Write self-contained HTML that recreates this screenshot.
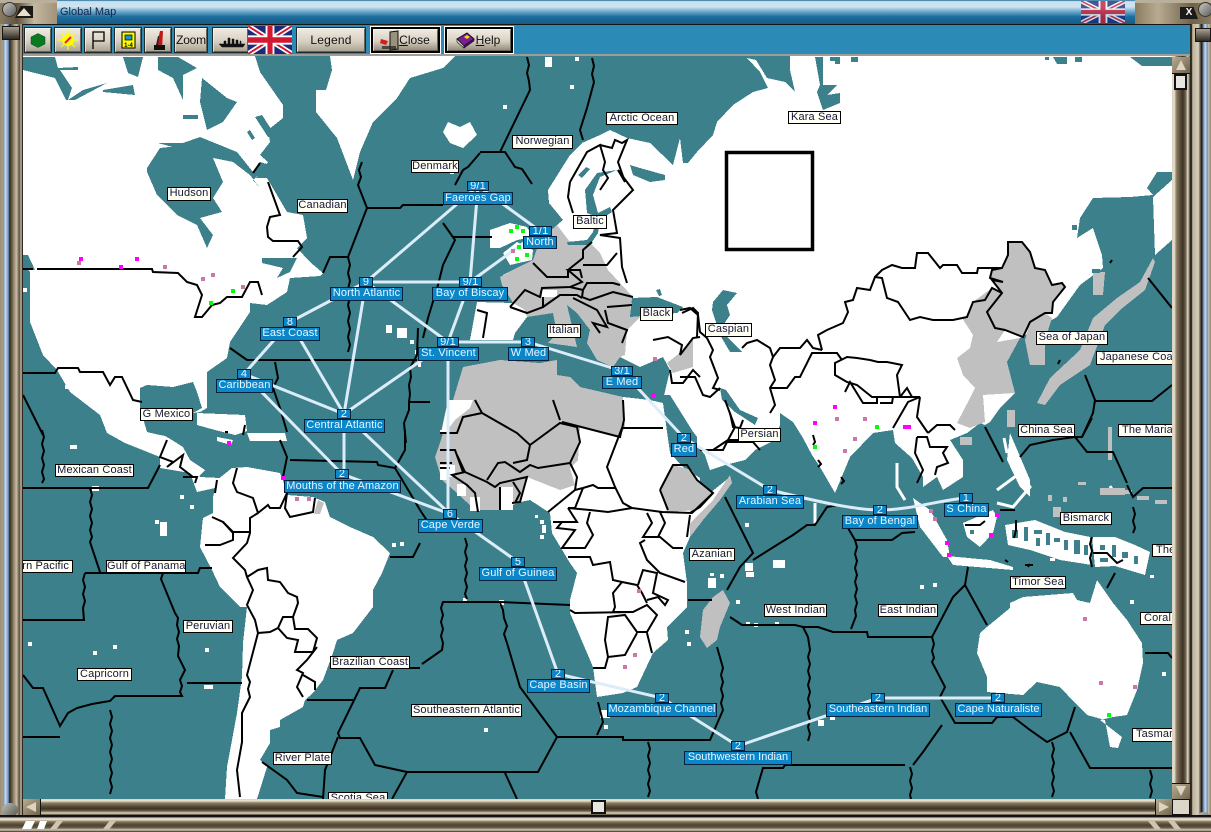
<!DOCTYPE html>
<html><head><meta charset="utf-8"><title>Global Map</title>
<style>
html,body{margin:0;padding:0;background:#3b808b;overflow:hidden}
#page{position:relative;width:1211px;height:832px;overflow:hidden;font-family:"Liberation Sans",sans-serif;background:#6b6150}
.a{position:absolute}
#map{position:absolute;left:0;top:0;width:1211px;height:832px}
#labels{position:absolute;left:0;top:0;width:1211px;height:832px;clip-path:inset(56px 39px 33px 23px)}
#labels div{position:absolute;box-sizing:border-box;border:1px solid #000;font-size:11px;text-align:center;white-space:nowrap;overflow:hidden;letter-spacing:.15px}
#labels .w{background:#fffff4;color:#14143c;line-height:11px}
#labels .b{background:#0a86c9;color:#eaf6ff;line-height:11px;border:1.5px solid #06203c}
#labels .n{background:#0a86c9;color:#eaf6ff;line-height:8px;border:1.5px solid #06203c}
.btn{position:absolute;top:27px;height:26px;box-sizing:border-box;border:1px solid #1b2a2e;background:linear-gradient(#f0ebe2,#d8d0c2 55%,#a89f8e);font-size:12px;color:#111;text-align:center;line-height:24px;box-shadow:inset 1px 1px 0 #fff8,inset -1px -1px 0 #6a6254}
.def{border:2px solid #000;outline:1px solid #fff;background:linear-gradient(#f0ebe2,#d8d0c2 55%,#8f8776)}
.hs{background:linear-gradient(#d8d0bc 0,#e8e2d2 12%,#8a7c62 25%,#5a4e3a 45%,#3c3226 60%,#6a5e48 75%,#e0d8c6 88%,#4a4032 100%)}
.vs{background:linear-gradient(90deg,#d8d0bc 0,#e8e2d2 12%,#8a7c62 25%,#5a4e3a 45%,#3c3226 60%,#6a5e48 75%,#e0d8c6 88%,#4a4032 100%)}
</style></head><body>
<div id="page">
<svg id="map" viewBox="0 0 1211 832" width="1211" height="832">
<defs>
<clipPath id="mc"><rect x="23" y="56" width="1149" height="743"/></clipPath>
<symbol id="uk" viewBox="0 0 60 36" preserveAspectRatio="none">
<rect width="60" height="36" fill="#1c2a78"/>
<path d="M0 0L60 36M60 0L0 36" stroke="#fff" stroke-width="7"/>
<path d="M0 0L60 36M60 0L0 36" stroke="#d01830" stroke-width="2.5"/>
<path d="M30 0V36M0 18H60" stroke="#fff" stroke-width="12"/>
<path d="M30 0V36M0 18H60" stroke="#d01830" stroke-width="7"/>
</symbol>
</defs>
<g clip-path="url(#mc)">
<rect x="23" y="56" width="1149" height="743" fill="#3b808b"/>
<!-- land -->
<g fill="#fff" shape-rendering="crispEdges">
<!-- North America -->
<path d="M23 56L255 56 260 72 283 105 283 118 268 130 270 142 260 155 268 162 256 178 267 178 287 212 303 215 307 238 297 248 310 262 323 273 320 276 290 278 287 292 267 305 250 303 250 312 230 342 227 358 207 372 207 408 200 412 193 413 173 387 147 385 140 388 100 415 70 392 57 370 43 355 30 322 30 272 23 265Z"/>
<path d="M57 370L70 392 100 415 107 433 125 443 160 457 160 468 190 473 197 492 215 488 220 478 200 477 190 460 183 447 172 440 165 436 147 432 140 408 140 388 130 380 100 372Z"/>
<path d="M160 457L190 466 197 478 205 470 190 460 165 445Z"/>
<path d="M197 413L245 415 247 431 235 435 215 430 197 425Z"/>
<path d="M217 437L233 440 231 445 217 441ZM247 433L285 433 287 441 250 441Z"/>
<!-- Greenland -->
<path d="M330 56L332 70 326 90 316 90 316 112 337 138 353 180 360 152 373 122 397 98 410 78 443 68 455 56Z"/>
<!-- South America -->
<path d="M232 468L247 467 280 473 283 480 287 495 313 497 325 502 330 517 350 527 373 537 390 553 382 573 373 590 373 607 353 633 337 640 333 653 323 680 313 693 305 700 303 707 280 720 280 727 270 730 270 743 260 760 267 767 257 799 225 799 227 767 237 713 242 677 243 643 247 607 240 607 220 587 212 570 200 547 202 527 203 518 213 513 213 497 217 480Z"/>
<!-- Iceland -->
<path d="M443 132L448 122 460 127 470 122 477 135 463 148 450 143Z"/>
<!-- UK -->
<path d="M490 230L510 223 527 227 533 237 517 240 500 248 490 248Z"/>
<path d="M503 253L517 242 533 250 532 260 510 265Z"/>
<!-- Eurasia -->
<path d="M470 340L477 302 513 303 502 285 503 275 533 260 540 240 557 225 563 220 549 203 548 190 570 155 582 143 600 135 610 130 627 138 650 143 673 165 680 138 683 163 688 163 697 152 713 135 717 122 733 105 753 92 768 88 760 72 747 58 756 60 767 78 785 82 795 92 790 70 790 56 1172 56 1172 172 1157 172 1147 188 1153 195 1130 197 1093 198 1080 218 1077 238 1093 228 1102 255 1103 268 1080 285 1057 317 1020 338 1007 362 1013 392 1000 408 985 425 980 423 967 433 950 440 963 460 963 477 943 490 937 477 923 487 923 477 912 458 895 443 893 430 873 433 850 457 835 493 820 467 812 455 803 438 793 422 780 413 780 425 775 440 755 450 745 460 725 465 710 470 705 455 697 445 697 437 673 405 663 400 670 370 663 357 640 367 620 357 613 367 597 360 587 343 590 330 577 313 567 305 577 347 548 343 557 333 553 313 527 317 515 333 513 340Z"/>
<path d="M1153 197L1172 180 1172 240 1155 255Z"/>
<!-- Africa -->
<path d="M440 443L447 420 463 367 500 360 540 363 557 360 557 375 570 377 580 387 593 390 623 397 650 400 663 403 670 453 683 467 700 478 700 490 710 493 730 477 713 507 690 537 683 553 687 583 687 607 667 627 668 640 653 653 637 687 623 693 597 697 593 667 570 613 570 600 577 573 570 563 552 533 550 513 530 500 520 502 503 510 475 510 457 493 442 480 435 457Z"/>
<!-- Australia -->
<path d="M987 627L1010 608 1010 603 1023 597 1073 593 1077 600 1090 603 1097 580 1113 603 1127 620 1142 643 1143 663 1137 690 1127 715 1113 717 1100 720 1122 737 1118 748 1110 747 1105 720 1087 715 1075 703 1060 687 1037 682 1023 695 987 692 987 677 977 653 980 633Z"/>
<!-- SE Asia -->
<path d="M963 523L993 510 997 517 993 533 980 547 967 537Z"/>
<path d="M913 498L930 510 947 540 950 557 943 557 920 527Z"/>
<path d="M947 556L990 560 1013 567 1013 570 953 565Z"/>
<path d="M1010 433L1030 480 1030 497 1020 487 1007 460Z"/>
<path d="M1005 525L1035 520 1065 532 1090 537 1092 565 1060 560 1030 550 1008 545Z"/>
<path d="M1092 537L1115 537 1135 545 1150 552 1145 575 1115 566 1095 567Z"/>
<!-- small islands -->
<path d="M23 288h4v4h-4zM70 445h7v4h-7zM92 486h7v5h-7zM180 495h4v4h-4zM155 520h4v4h-4zM160 522h7v14h-7zM190 505h4v4h-4zM206 534h4v3h-4zM28 642h4v4h-4zM93 651h4v4h-4zM113 645h4v4h-4zM205 648h4v4h-4zM204 685h9v4h-9zM392 543h4v4h-4zM400 542h4v4h-4zM54 360h4v4h-4zM100 390h4v4h-4zM65 385h4v4h-4zM386 325h6v8h-6zM397 328h10v10h-10zM410 340h4v4h-4zM415 350h4v4h-4zM418 362h3v5h-3zM440 430h5v4h-5zM508 225h6v6h-6zM528 140h4v4h-4zM570 85h4v4h-4zM503 105h4v4h-4zM450 170h4v4h-4zM545 57h7v10h-7zM575 57h4v4h-4zM535 515h3v3h-3z"/>
<path d="M463 598h4v5h-4zM499 600h5v5h-5zM540 520h4v4h-4zM542 525h4v8h-4zM540 535h4v4h-4zM708 578h8v10h-8zM710 573h4v3h-4zM745 523h4v4h-4zM720 574h4v4h-4zM736 600h4v4h-4zM746 572h8v5h-8zM745 563h8v8h-8zM746 622h4v4h-4zM754 623h4v4h-4zM775 622h4v4h-4zM773 560h12v8h-12zM685 630h4v4h-4zM687 642h4v4h-4zM483 710h4v4h-4zM484 728h4v4h-4zM600 710h10v8h-10zM604 725h4v4h-4zM1050 558h5v3h-5zM1060 600h4v4h-4zM1130 600h4v4h-4zM818 720h6v6h-6zM933 583h4v4h-4zM920 585h4v4h-4zM1162 672h4v4h-4zM830 715h5v5h-5zM1150 575h4v3h-4z"/>
</g>
<path d="M815 503v20M897 463v24l8 13M1110 486l5 8M1004 438l3 15" stroke="#fff" stroke-width="3" fill="none"/>
<path d="M997 490L1020 473 1030 487 1013 507 997 503" stroke="#fff" stroke-width="3" fill="none"/>
<!-- gray -->
<g fill="#c0c0c0" shape-rendering="crispEdges">
<path d="M463 367L500 360 540 363 557 360 557 375 570 377 580 387 593 390 623 397 625 427 620 437 580 427 578 460 570 468 575 485 560 490 527 477 520 502 503 510 475 510 457 493 442 480 435 457 440 443 447 420Z"/>
<path d="M660 490L673 465 692 470 700 483 713 493 697 510 667 512Z"/>
<path d="M690 523L700 513 713 500 730 475 732 483 720 500 703 520 690 537Z"/>
<path d="M700 637L703 610 713 597 723 590 730 603 720 627 717 640 707 648Z"/>
<path d="M500 277L533 260 540 240 557 225 570 242 587 240 600 253 608 270 620 283 633 297 630 307 640 317 627 330 625 355 620 357 613 367 597 360 587 343 590 330 577 313 567 305 577 347 548 343 557 333 553 313 527 317 525 310 513 303 502 285Z"/>
<path d="M667 363L687 347 693 337 693 367 673 373Z"/>
<path d="M962 318L973 335 970 348 957 358 963 375 975 388 970 398 957 423 970 428 985 422 983 395 1015 393 1007 362 1020 338 997 342 1005 330 987 312 1002 293 992 288 973 302 967 317Z"/>
<path d="M1008 242L1022 242 1030 252 1035 268 1045 270 1052 285 1062 283 1065 287 1053 302 1052 313 1045 313 1030 322 1023 337 1005 330 995 328 987 312 1002 293 992 280 1003 282 990 278 992 270 1002 268 1008 255Z"/>
<path d="M1025 340L1030 322 1045 313 1052 318 1045 340 1045 365 1030 365Z"/>
<path d="M1037 403L1050 378 1080 350 1093 318 1117 298 1140 282 1153 258 1155 262 1145 290 1120 310 1105 325 1090 365 1060 385 1045 405Z"/>
<path d="M1093 272h12l-2 23h-10zM1100 488h25v7h-25zM1078 482h8v3h-8zM1053 507h8v10h-8zM1108 427h4v33h-4zM1007 410h8v17h-8zM960 437h12v8h-12zM1124 490h8v4h-8zM1137 496h12v4h-12zM1155 500h12v4h-12zM1063 497h4v5h-4zM1048 495h4v6h-4z"/>
</g>
<path d="M542 290h15v7h-15zM985 395L1015 393 1000 408 990 422 985 425Z" fill="#fff"/>
<path d="M448 400H473L470 408 455 420 446 432 441 433Z" fill="#fff"/>
<path d="M457 484h9v12h-9zM470 497h10v14h-10zM500 487h13v23h-13zM440 465h15v12h-15zM440 475h8v5h-8z" fill="#fff"/>
<path d="M318 500l6 3-4 11h-6z" fill="#c0c0c0"/>
<!-- teal patches -->
<g fill="#3b808b" shape-rendering="crispEdges">
<path d="M23 70L23 57 55 57 58 68 78 67 78 70 60 70 72 88 68 100 83 90 107 83 90 92 75 100 66 100 55 78Z"/>
<path d="M103 90L133 85 135 95 103 92Z"/>
<path d="M123 57L143 57 138 77 128 73Z"/>
<path d="M158 57L178 57 197 68 183 75 183 100 173 78 158 70Z"/>
<path d="M202 78L227 98 237 102 223 122 207 130 200 102Z"/>
<path d="M183 115h15v4h-15zM205 115l10 0 0 3-10 0z"/>
<path d="M255 117L262 115 275 135 268 137ZM250 130l5 8-3 2-5-8z"/>
<path d="M158 143L183 143 200 137 237 152 253 172 260 162 270 165 253 180 260 188 250 175 233 162 213 158 Z"/>
<path d="M147 168L160 148 187 145 213 158 223 182 213 198 222 212 200 218 213 235 207 248 197 225 177 215 157 195 147 172Z"/>
<path d="M262 258L297 258 290 272 277 278 283 268 262 263Z"/>
<path d="M140 388L147 385 173 387 193 382 197 392 202 408 193 413 190 422 160 435 147 432 140 408Z"/>
<path d="M23 255h5l7 15h-12z"/>
<!-- Baltic -->
<path d="M567 242L587 240 593 232 597 217 587 213 585 190 597 173 617 170 600 177 593 195 598 213 610 207 612 212 600 220 598 233 590 245 568 245Z"/>
<path d="M630 165L640 168 665 175 665 180 650 182 633 175Z"/>
<path d="M500 120h6v10h-6zM578 175l8-8 4 2-8 9z"/>
<!-- Black / Caspian -->
<path d="M632 298L657 297 683 307 677 313 630 317ZM656 290l3 6 3-1-2-6z"/>
<path d="M713 302L723 290 737 293 727 305 730 315 720 330 735 345 742 352 730 352 720 335 712 310Z"/>
<!-- Red Sea and gulf -->
<path d="M660 395L670 395 695 435 697 455 703 470 695 470 685 445Z"/>
<path d="M720 388L726 390 740 410 758 418 755 425 735 412 722 400Z"/>
<!-- Arctic Russia -->
<path d="M815 57L823 57 823 85 837 85 827 95 840 93 840 103 823 110 817 92 820 85ZM830 57h10v7h-5v-3h-5zM851 57h7v5h-7zM1053 57h14v7h-10zM1075 57h7v5h-7zM1130 57h42v9h-30zM1045 57h4v3h-4zM1072 225h5v5h-5z"/>
<path d="M1092 269h8v4h-8z"/>
<!-- Indonesia speckle -->
<path d="M1012 530h6v8h-6zM1024 527h4v14h-4zM1034 530h8v4h-8zM1036 538h4v8h-4zM1046 533h4v12h-4zM1054 538h6v4h-6zM1064 540h4v10h-4zM1074 540h6v14h-6zM1084 545h4v10h-4zM1100 545h5v5h-5zM1112 545h4v12h-4zM1122 552h6v6h-6zM1134 556h4v8h-4zM1100 558h8v4h-8zM970 530h4v4h-4zM960 548h8v3h-8z"/>
</g>
<!-- borders -->
<g fill="none" stroke="#000" stroke-width="2" stroke-linejoin="miter">
<path d="M527 57l2 8-2 8 2 8 1 9-30 62h-20l25 0 10 15 7 2 10 15"/>
<path d="M480 153l-12 14-5 3-8 15"/>
<path d="M592 58l2 8-2 8 2 8-7 26-7 22 3 10"/>
<path d="M362 162l-3 8 2 7-3 8 9 23h33l3-3h40"/>
<path d="M443 223l12 17-12 25-5 20-10 33-5 20"/>
<path d="M453 237h39"/>
<path d="M367 208L348 257H330L323 273"/>
<path d="M348 257l2 8-2 8 2 8-2 8 2 8-2 8 2 8-2 8 2 8-2 8 2 8-2 7"/>
<path d="M230 348L247 360H417"/>
<path d="M275 362l3 16-5 10 7 20 7 24"/>
<path d="M418 328l-1 27-7 13 1 9-2 8 1 9-1 8 0 8-5 13 2 20"/>
<path d="M410 402h20"/>
<path d="M23 373H55l3-5H78l2 4H103l7 13 5-8H122l11 23 9 2"/>
<path d="M23 269H33M37 269H152l1 3 25 1 9 9 10 3 5 10-7 22h7l10-12 8-2 7-6h15l8-15h8l4 13"/>
<path d="M268 182L280 215 270 217 267 227 268 237 273 241H298L302 247 293 257"/>
<path d="M260 163L253 173"/>
<path d="M23 395L43 435"/>
<path d="M42 430l2 7-2 7 2 7-2 7 2 7-2 7 2 7-2 4"/>
<path d="M23 488H148L160 465"/>
<path d="M90 488l2 7-2 7 2 7-2 7 2 7-2 7 2 7-2 5 10 30"/>
<path d="M85 573H198L200 568H212"/>
<path d="M85 573l-2 7 2 7-2 7 2 7-2 7 1 12H23"/>
<path d="M163 573l-2 6 14 34 3 5-1 7 2 7-2 7 2 7-1 10 7 14-5 10 2 6-2 6 2 4H115l-5 5-18 3-15 4-9 5-8 13-17-38H33L23 675"/>
<path d="M23 737H60"/>
<path d="M110 710l2 7-2 7 2 7-2 7 2 7-2 7 2 7-2 7 2 7-2 7 2 7-2 7"/>
<path d="M187 683H242"/>
<path d="M353 700H307"/>
<path d="M393 670L385 688H360L338 733 340 738H360L375 765 407 772 392 799"/>
<path d="M338 737L325 770 323 799"/>
<path d="M407 772H430M408 668H420M390 557H413L420 543"/>
<path d="M290 460L377 462 378 465 395 468 410 493 420 510 430 525"/>
<path d="M405 430v20l-10 18"/>
<!-- S America -->
<path d="M237 468L233 483 237 492 253 498 258 513 268 505 270 508H280L287 493 285 508 290 517 313 512 315 498"/>
<path d="M258 513L250 518V533L247 543 233 558 245 570 247 577 253 590 247 605 255 620 258 633 247 675l3 7-2 7 2 8-8 16v29l-5 28 3 27"/>
<path d="M212 517L223 522 233 533V540L220 545H205"/>
<path d="M223 522L233 532H250"/>
<path d="M247 577L258 570 267 568 268 580 280 582 288 593 297 597 298 603 293 617H283L278 628 270 632 258 633"/>
<path d="M278 628L287 638 298 640 295 652H313L317 638 308 629H295L293 617"/>
<path d="M317 647L307 660 297 670 303 673 297 687 303 697"/>
<path d="M303 675L315 682V690"/>
<path d="M262 762L287 780 297 793 323 797"/>
<!-- C America -->
<path d="M167 440L160 457 173 462 167 467 183 455 180 467 193 477M183 477H197L195 483M217 480L215 493M280 440L287 457 283 477M225 432h3M245 425l-2 10"/>
<!-- Oceans S -->
<path d="M465 538l2 7-2 7 2 7-2 7 2 7-2 7 2 7-2 7 2 5"/>
<path d="M467 602H443l-2 6 2 7-2 7 2 7-2 7 2 7-1 7-20 14"/>
<path d="M443 602H500L570 605"/>
<path d="M500 603l3 7 1 8 3 8-3 8 3 9 13 44 37 50-19 35H420"/>
<path d="M557 737H623V740H710L723 710l-2-7 2-7-2-7 2-7-2-7 2-7-2-7-4-14"/>
<path d="M598 702l2 8 3 12-6 13"/>
<path d="M648 742l2 7-2 7 2 7-2 7 2 7-2 7 2 7-2 6"/>
<path d="M505 773L517 799"/>
<path d="M758 799l-2-7 2-7 2-7 3-10h20l2-3h120"/>
<path d="M688 600H712"/>
<path d="M730 617L742 625H795L803 627H818L833 632H867L868 637H932L953 597 965 585 968 567"/>
<path d="M803 627l5 10 2 13-2 7 2 7-2 7 2 7-2 7 2 7-2 7 2 7-2 7 2 7-2 7 2 7-2 7"/>
<path d="M725 497L753 553 740 567 727 590"/>
<path d="M753 560L780 543 793 535 807 525H815L827 507 838 505"/>
<path d="M848 528L855 540H892L902 533 915 532"/>
<path d="M855 540l2 7-2 7 2 7-2 7 2 7-2 7 2 7-2 7 2 7-2 7 1 6-5 13"/>
<path d="M965 585L987 625"/>
<path d="M932 637l2 7-2 7 2 7-2 4 13 25-5 10 15 26H992L997 717H1013L1030 730 1047 742 1067 732 1075 707"/>
<path d="M942 725L923 752 913 765"/>
<path d="M910 767l2 7-2 7 2 7-2 7 1 4"/>
<path d="M1052 742l2 7-2 7 2 7-2 7 2 7-2 7 2 7-2 6"/>
<path d="M1070 732L1090 768H1172"/>
<path d="M1150 770l2 7-2 7 2 7-2 7"/>
<path d="M1145 653H1168L1172 658"/>
<path d="M1092 537l-2 7 2 7-2 7 2 9M1093 553H1107L1117 563 1123 560M1107 588L1115 573"/>
<path d="M1133 507l2 7-2 7 2 7-2 5"/>
<path d="M1127 485L1133 497 1143 488H1172"/>
<path d="M1020 457L1030 445 1053 440 1075 437 1082 437 1092 418"/>
<path d="M1075 437L1087 452H1113L1127 483"/>
<path d="M985 427L1003 462"/>
<path d="M1016 520v10l-2 8M1000 510l15 0M1025 565h8M1005 560l3 2M1030 564l-2 3M965 525h15l5-4M1008 510h4"/>
<!-- Japan pacific -->
<path d="M1085 375L1095 400 1093 413 1082 437M1095 401H1152L1172 385"/>
<path d="M1148 278L1172 308"/>
<path d="M1112 260l-2 3M1060 360l-2 4"/>
<!-- Asia -->
<path d="M822 350L818 335 827 330 843 323 848 312 845 302 853 300 857 288 870 290 875 277 882 278 887 298 898 302 910 320 920 317 933 320H953L967 317 973 302 985 300 992 288 1002 293"/>
<path d="M875 277L882 270 892 265 902 268H915L917 253H928L940 268 943 265H957L962 273H977L978 268H1002"/>
<path d="M1008 242H1022L1030 252 1035 268 1045 270 1052 285 1062 283 1065 287 1053 302 1052 313H1045L1030 322 1023 337 1005 330 995 328 987 312 1002 293 992 280 1003 282 990 278 992 270 1002 268 1008 255Z"/>
<path d="M680 310L690 308 698 315 700 332 707 338 713 350 710 357 718 378 713 388 720 390"/>
<path d="M742 348L747 343 757 340 770 348 773 357 780 348H800L807 340 813 348 822 350"/>
<path d="M773 357L770 365 775 380 770 388 775 405 770 413"/>
<path d="M770 388H787L795 377H800L812 353H837L842 360"/>
<path d="M835 363V375L847 382 857 385 872 397H900L897 375 902 365 887 362H878L870 360 857 358 847 357Z"/>
<path d="M845 392L850 382 863 403H877V397M880 403H892L893 397"/>
<path d="M893 428L908 402 920 397H900L907 388 912 397M920 397L917 417 928 433"/>
<path d="M917 437L915 453 923 470 917 483"/>
<path d="M917 437H927L930 447H947L943 453 948 463 937 467 935 475"/>
<path d="M928 433L937 425H950L955 430"/>
<path d="M813 435l2 7-2 3M818 460l3 4-3 3M841 477l3 4-3 3"/>
<path d="M680 355L693 338 700 337"/>
<path d="M680 377H695L703 395 710 397 720 388"/>
<path d="M730 413L733 427 740 428 743 420M728 440H738"/>
<path d="M725 400L735 427 728 440 713 450M700 450H723L727 442H753L760 450"/>
<!-- Africa borders -->
<path d="M475 400L482 413 463 417 457 433H440"/>
<path d="M482 413L517 433 530 445 560 423 577 427 580 442 570 463 577 477 575 490"/>
<path d="M553 400L560 420M562 422L620 437 624 420 623 400"/>
<path d="M622 428H663M622 428L607 467 615 487 623 503 632 508 662 512 692 513 713 493"/>
<path d="M570 463L538 468 530 465 520 472 505 462 498 463 487 480"/>
<path d="M530 445L527 460 513 463"/>
<path d="M457 455L465 472 487 482 495 487 500 483 527 477 520 502 512 503"/>
<path d="M465 472L452 475 467 485 475 493 478 512"/>
<path d="M500 487V510M513 482L520 493 515 503"/>
<path d="M440 450H455L463 472M440 463H452M440 468H450"/>
<path d="M575 490L583 488 593 485 598 488H615"/>
<path d="M583 488L575 508H568L590 510 608 512 632 508"/>
<path d="M575 490L548 512"/>
<path d="M568 508L577 522H553M577 522H562L557 528 575 530 562 548H585L593 535 587 523 590 512"/>
<path d="M647 513L652 523 643 537H660L673 548H683"/>
<path d="M660 512L665 523 658 537M690 515L687 537"/>
<path d="M568 557H590L593 565 610 562 613 580 622 582 613 593 615 607 613 612H633L647 605 657 615 647 632H637L625 615 608 617 605 640 608 657 605 668H593"/>
<path d="M570 610L575 613 633 612"/>
<path d="M622 582L637 585 642 593 647 603"/>
<path d="M638 585L643 570 657 573 653 593 668 600 665 605 658 597 647 600"/>
<path d="M645 540L640 543 647 560 660 573 685 582"/>
<path d="M637 633L625 655 608 657M647 633L652 653"/>
<path d="M660 490L673 465H687L697 480 713 493 700 507 690 513M660 490L668 510"/>
<!-- Europe borders -->
<path d="M510 307L525 290 540 297 542 288 570 287 582 282 568 270H580L582 278"/>
<path d="M510 307L527 313 543 307V297"/>
<path d="M533 263L547 277H568V270M568 270L583 258V250L592 242"/>
<path d="M583 265H607L617 253"/>
<path d="M570 287L583 290 587 283H613L620 285"/>
<path d="M583 290L582 297 590 300 613 292 633 297"/>
<path d="M543 307L560 295H577L582 298"/>
<path d="M573 298L597 310 607 327 593 323 600 333"/>
<path d="M607 307L632 305M605 310L608 323 627 330 622 343"/>
<path d="M477 310L487 313 483 338"/>
<path d="M570 182L568 197 573 213"/>
<path d="M618 170L633 190 613 210 617 233 600 235 620 238 622 267 627 283"/>
<path d="M570 182L587 152 600 145 605 162 603 170 608 178 600 190"/>
<path d="M600 145L612 148 615 140 622 143 627 140 618 162 625 182 618 170"/>
<path d="M670 370L672 383H683L693 370 700 377"/>
<path d="M682 313L693 308 698 313 697 337"/>
<path d="M653 340L668 337 682 345 680 355"/>
</g>
<!-- network lines -->
<g stroke="#dcedf9" stroke-width="3" fill="none">
<path d="M478 186L366 282M478 186L470 282M478 186L540 231M540 231L470 282M366 282H470M470 282L448 342M366 282L448 342M366 282L344 414M366 282L290 322M290 322L244 374M290 322L344 414M244 374L344 414M244 374L342 474M448 342L344 414M448 342H528M528 342L622 371M448 342V514M344 414V474M344 414L450 514M342 474L450 514M450 514L518 562M518 562L558 674M558 674L662 698M662 698L738 746M738 746L878 698M878 698H998M622 371L684 438M684 438L770 490M770 490C800 497 850 510 880 510C910 510 940 500 966 498"/>
</g>
<!-- viewport rect -->
<rect x="726.5" y="152.5" width="86" height="97" fill="none" stroke="#000" stroke-width="3.5"/>
<!-- dots -->
<g fill="#ff00ff" shape-rendering="crispEdges">
<rect x="79" y="257" width="4" height="4"/><rect x="119" y="265" width="4" height="4"/><rect x="135" y="257" width="4" height="4"/><rect x="651" y="393" width="4" height="4"/><rect x="227" y="441" width="4" height="4"/><rect x="281" y="476" width="4" height="4"/><rect x="833" y="405" width="4" height="4"/><rect x="813" y="421" width="4" height="4"/><rect x="903" y="425" width="8" height="4"/><rect x="995" y="513" width="4" height="4"/><rect x="989" y="533" width="4" height="4"/><rect x="945" y="541" width="4" height="4"/><rect x="947" y="553" width="4" height="4"/>
</g>
<g fill="#cc77aa" shape-rendering="crispEdges">
<rect x="77" y="261" width="4" height="4"/><rect x="163" y="265" width="4" height="4"/><rect x="201" y="277" width="4" height="4"/><rect x="211" y="273" width="4" height="4"/><rect x="241" y="285" width="4" height="4"/><rect x="511" y="249" width="4" height="4"/><rect x="653" y="357" width="4" height="4"/><rect x="295" y="497" width="4" height="4"/><rect x="307" y="497" width="4" height="4"/><rect x="835" y="417" width="4" height="4"/><rect x="863" y="417" width="4" height="4"/><rect x="853" y="437" width="4" height="4"/><rect x="843" y="449" width="4" height="4"/><rect x="929" y="509" width="4" height="4"/><rect x="933" y="517" width="4" height="4"/><rect x="1083" y="617" width="4" height="4"/><rect x="1099" y="681" width="4" height="4"/><rect x="1133" y="685" width="4" height="4"/><rect x="637" y="589" width="4" height="4"/><rect x="633" y="653" width="4" height="4"/><rect x="623" y="665" width="4" height="4"/>
</g>
<g fill="#00ff00" shape-rendering="crispEdges">
<rect x="231" y="289" width="4" height="4"/><rect x="209" y="301" width="4" height="4"/><rect x="509" y="229" width="4" height="4"/><rect x="515" y="225" width="4" height="4"/><rect x="521" y="229" width="4" height="4"/><rect x="517" y="245" width="4" height="4"/><rect x="515" y="257" width="4" height="4"/><rect x="525" y="253" width="4" height="4"/><rect x="813" y="445" width="4" height="4"/><rect x="875" y="425" width="4" height="4"/><rect x="1107" y="713" width="4" height="4"/>
</g>
</g>
</svg>

<div id="labels">
<div class="w" style="left:606px;top:112px;width:72px;height:13px">Arctic Ocean</div>
<div class="w" style="left:788px;top:111px;width:53px;height:13px">Kara Sea</div>
<div class="w" style="left:512px;top:135px;width:61px;height:14px">Norwegian</div>
<div class="w" style="left:411px;top:160px;width:48px;height:13px">Denmark</div>
<div class="w" style="left:167px;top:187px;width:44px;height:14px">Hudson</div>
<div class="w" style="left:297px;top:199px;width:51px;height:14px">Canadian</div>
<div class="w" style="left:573px;top:215px;width:34px;height:14px">Baltic</div>
<div class="w" style="left:547px;top:324px;width:34px;height:14px">Italian</div>
<div class="w" style="left:640px;top:307px;width:33px;height:14px">Black</div>
<div class="w" style="left:705px;top:323px;width:47px;height:14px">Caspian</div>
<div class="w" style="left:140px;top:408px;width:53px;height:13px">G Mexico</div>
<div class="w" style="left:738px;top:428px;width:43px;height:14px">Persian</div>
<div class="w" style="left:55px;top:464px;width:79px;height:13px">Mexican Coast</div>
<div class="w" style="left:-20px;top:560px;width:93px;height:13px;text-align:right;padding-right:3px">ern Pacific</div>
<div class="w" style="left:106px;top:560px;width:80px;height:13px">Gulf of Panama</div>
<div class="w" style="left:183px;top:620px;width:50px;height:13px">Peruvian</div>
<div class="w" style="left:77px;top:668px;width:55px;height:13px">Capricorn</div>
<div class="w" style="left:330px;top:656px;width:80px;height:13px">Brazilian Coast</div>
<div class="w" style="left:273px;top:752px;width:59px;height:13px">River Plate</div>
<div class="w" style="left:328px;top:792px;width:60px;height:14px">Scotia Sea</div>
<div class="w" style="left:411px;top:704px;width:111px;height:13px">Southeastern Atlantic</div>
<div class="w" style="left:689px;top:548px;width:46px;height:13px">Azanian</div>
<div class="w" style="left:764px;top:604px;width:63px;height:13px">West Indian</div>
<div class="w" style="left:878px;top:604px;width:60px;height:13px">East Indian</div>
<div class="w" style="left:1018px;top:424px;width:57px;height:13px">China Sea</div>
<div class="w" style="left:1036px;top:331px;width:72px;height:14px">Sea of Japan</div>
<div class="w" style="left:1096px;top:351px;width:82px;height:14px;text-align:left;padding-left:3px">Japanese Coast</div>
<div class="w" style="left:1118px;top:424px;width:80px;height:13px;text-align:left;padding-left:3px">The Marianas</div>
<div class="w" style="left:1060px;top:512px;width:52px;height:13px">Bismarck</div>
<div class="w" style="left:1152px;top:544px;width:60px;height:13px;text-align:left;padding-left:3px">The</div>
<div class="w" style="left:1010px;top:576px;width:56px;height:13px">Timor Sea</div>
<div class="w" style="left:1140px;top:612px;width:60px;height:13px;text-align:left;padding-left:3px">Coral Sea</div>
<div class="w" style="left:1132px;top:728px;width:70px;height:14px;text-align:left;padding-left:3px">Tasman Sea</div>

<div class="b" style="left:443px;top:192px;width:70px;height:13px">Faeroes Gap</div><div class="n" style="left:467px;top:181px;width:22px;height:10px">9/1</div>
<div class="b" style="left:523px;top:236px;width:34px;height:13px">North</div><div class="n" style="left:529px;top:226px;width:23px;height:10px">1/1</div>
<div class="b" style="left:432px;top:287px;width:76px;height:14px">Bay of Biscay</div><div class="n" style="left:459px;top:277px;width:23px;height:10px">9/1</div>
<div class="b" style="left:418px;top:347px;width:61px;height:14px">St. Vincent</div><div class="n" style="left:437px;top:337px;width:22px;height:10px">9/1</div>
<div class="b" style="left:508px;top:347px;width:41px;height:14px">W Med</div><div class="n" style="left:521px;top:337px;width:14px;height:10px">3</div>
<div class="b" style="left:602px;top:376px;width:40px;height:13px">E Med</div><div class="n" style="left:611px;top:366px;width:22px;height:10px">3/1</div>
<div class="b" style="left:330px;top:287px;width:73px;height:14px">North Atlantic</div><div class="n" style="left:359px;top:277px;width:14px;height:10px">9</div>
<div class="b" style="left:260px;top:327px;width:60px;height:14px">East Coast</div><div class="n" style="left:283px;top:317px;width:14px;height:10px">8</div>
<div class="b" style="left:216px;top:379px;width:57px;height:14px">Caribbean</div><div class="n" style="left:237px;top:369px;width:14px;height:10px">4</div>
<div class="b" style="left:304px;top:419px;width:81px;height:14px">Central Atlantic</div><div class="n" style="left:337px;top:409px;width:14px;height:10px">2</div>
<div class="b" style="left:284px;top:480px;width:117px;height:13px">Mouths of the Amazon</div><div class="n" style="left:335px;top:469px;width:14px;height:10px">2</div>
<div class="b" style="left:418px;top:519px;width:65px;height:14px">Cape Verde</div><div class="n" style="left:443px;top:509px;width:14px;height:10px">6</div>
<div class="b" style="left:479px;top:567px;width:78px;height:14px">Gulf of Guinea</div><div class="n" style="left:511px;top:557px;width:14px;height:10px">5</div>
<div class="b" style="left:527px;top:679px;width:63px;height:14px">Cape Basin</div><div class="n" style="left:551px;top:669px;width:14px;height:10px">2</div>
<div class="b" style="left:607px;top:703px;width:110px;height:14px;letter-spacing:0">Mozambique Channel</div><div class="n" style="left:655px;top:693px;width:14px;height:10px">2</div>
<div class="b" style="left:684px;top:751px;width:108px;height:14px;letter-spacing:0">Southwestern Indian</div><div class="n" style="left:731px;top:741px;width:14px;height:10px">2</div>
<div class="b" style="left:671px;top:443px;width:26px;height:14px">Red</div><div class="n" style="left:677px;top:433px;width:14px;height:10px">2</div>
<div class="b" style="left:736px;top:495px;width:68px;height:14px">Arabian Sea</div><div class="n" style="left:763px;top:485px;width:14px;height:10px">2</div>
<div class="b" style="left:842px;top:515px;width:76px;height:14px">Bay of Bengal</div><div class="n" style="left:873px;top:505px;width:14px;height:10px">2</div>
<div class="b" style="left:944px;top:503px;width:45px;height:14px">S China</div><div class="n" style="left:959px;top:493px;width:14px;height:10px">1</div>
<div class="b" style="left:826px;top:703px;width:104px;height:14px;letter-spacing:0">Southeastern Indian</div><div class="n" style="left:871px;top:693px;width:14px;height:10px">2</div>
<div class="b" style="left:955px;top:703px;width:87px;height:14px;letter-spacing:0">Cape Naturaliste</div><div class="n" style="left:991px;top:693px;width:14px;height:10px">2</div>
</div>

<!-- title bar -->
<div class="a" style="left:0;top:0;width:1211px;height:3px;background:#b9b09c"></div>
<div class="a" style="left:57px;top:0;width:1078px;height:24px;background:linear-gradient(#0f5f8f 0,#c9e0ee 6%,#cfe3ef 28%,#6fa9cc 48%,#1c6d9e 70%,#175b85 100%)"></div>
<div class="a" style="left:60px;top:5px;font-size:11px;color:#12264a;line-height:14px">Global Map</div>
<svg class="a" style="left:1081px;top:1px;width:44px;height:22px;opacity:.75"><use href="#uk" width="44" height="22"/></svg>
<div class="a" style="left:0;top:3px;width:57px;height:21px;background:linear-gradient(90deg,#8a7c62,#5e5340 30%,#c4b89e 60%,#a0937a);border-bottom:1px solid #1a1510"></div>
<div class="a" style="left:2px;top:2px;width:13px;height:13px;border-radius:50%;background:linear-gradient(135deg,#c8c8c4,#5c5c5c);border:1px solid #3a3428"></div>
<div class="a" style="left:15px;top:6px;width:18px;height:12px;background:#1c1a16;clip-path:polygon(30% 0,100% 0,100% 100%,0 100%)"></div>
<div class="a" style="left:17px;top:8px;width:14px;height:8px;background:#e8e0cc;clip-path:polygon(50% 0,100% 100%,0 100%)"></div>
<div class="a" style="left:1135px;top:3px;width:76px;height:21px;background:linear-gradient(90deg,#8a7c62,#b8ab90 30%,#6e624c 75%,#8a7c62);border-bottom:1px solid #1a1510"></div>
<div class="a" style="left:1180px;top:7px;width:18px;height:12px;background:#1c1a16;clip-path:polygon(0 0,75% 0,100% 100%,0 100%);color:#fff;font:bold 10px/12px 'Liberation Sans',sans-serif;text-align:center">X</div>
<div class="a" style="left:1198px;top:2px;width:13px;height:13px;border-radius:50%;background:linear-gradient(135deg,#c8c8c4,#5c5c5c);border:1px solid #3a3428"></div>

<!-- left frame -->
<div class="a" style="left:0;top:24px;width:23px;height:794px;background:linear-gradient(90deg,#9a8e76 0,#a89c84 12%,#6f93be 14%,#c8dcf0 24%,#6f93be 36%,#2c2820 42%,#5e5240 50%,#8c7e64 58%,#c8bea8 72%,#5a4e3c 84%,#c8bea8 92%,#1c1812 98%)"></div>
<div class="a" style="left:2px;top:26px;width:16px;height:12px;background:linear-gradient(#a8a090,#2e2a24);border:1px solid #1a1510"></div>
<div class="a" style="left:2px;top:803px;width:16px;height:14px;background:linear-gradient(135deg,#c0c0bc,#55554e);border-radius:50%"></div>

<!-- right frame -->
<div class="a" style="left:1190px;top:24px;width:21px;height:794px;background:linear-gradient(90deg,#2c2820 0,#2c2820 8%,#bcb19a 12%,#d8d0bc 40%,#6e624c 48%,#1c1812 56%,#6f93be 64%,#c8dcf0 74%,#6f93be 82%,#c6bca6 88%,#8e826a 100%)"></div>
<div class="a" style="left:1195px;top:28px;width:14px;height:12px;background:linear-gradient(#a8a090,#2e2a24);border:1px solid #1a1510"></div>
<div class="a" style="left:1196px;top:812px;width:15px;height:15px;background:linear-gradient(135deg,#c0c0bc,#55554e);border-radius:50%"></div>

<!-- toolbar -->
<div class="a" style="left:23px;top:24px;width:1167px;height:30px;background:#2c8ab6"></div>
<div class="a" style="left:23px;top:24px;width:1167px;height:1px;background:#1a1510"></div>
<div class="a" style="left:23px;top:54px;width:1167px;height:2px;background:#a09c98"></div>

<div class="btn" style="left:24px;width:28px"><svg width="26" height="24"><path d="M13 5.5L20 9V16L13 19.5 6 16V9Z" fill="#0a7a1e" stroke="#044" stroke-width=".5"/></svg></div>
<div class="btn" style="left:54px;width:28px"><svg width="26" height="24"><circle cx="13" cy="12" r="6" fill="#ffff00"/><path d="M13 2v20M3 12h20M6 5l14 14M20 5L6 19" stroke="#ffff00" stroke-width="1.2"/><path d="M10 15l6-6" stroke="#e02040" stroke-width="2"/></svg></div>
<div class="btn" style="left:84px;width:28px"><svg width="26" height="24"><path d="M8 21V4H19V13H8" fill="none" stroke="#000" stroke-width="1.3"/></svg></div>
<div class="btn" style="left:114px;width:28px"><svg width="26" height="24"><rect x="7" y="4" width="13" height="16" fill="#ffff00" stroke="#000"/><rect x="10" y="7" width="7" height="5" fill="#2090d0" stroke="#000" stroke-width=".7"/><text x="13.5" y="19" font-family="Liberation Sans,sans-serif" font-size="6" font-weight="bold" text-anchor="middle">1-4</text></svg></div>
<div class="btn" style="left:144px;width:28px"><svg width="26" height="24"><path d="M11 21L15 3H18L17 21Z" fill="#c01818"/><path d="M9 22h11v-5H9z" fill="#111"/><path d="M11 17L13 8h1l-1 9z" fill="#222"/></svg></div>
<div class="btn" style="left:174px;width:34px;font-size:12px;letter-spacing:-.2px">Zoom</div>
<div class="btn" style="left:212px;width:37px"><svg width="34" height="24"><path d="M5 16H31L29 19H8ZM10 16V13H12V16M14 16V10H16V16M18 16V11H20V16M22 16V12H24V16M26 16V13H27V16" fill="#111" stroke="#111" stroke-width=".5"/></svg></div>
<svg class="a" style="left:248px;top:26px;width:44px;height:28px"><use href="#uk" width="44" height="28"/></svg>
<div class="btn" style="left:296px;width:70px;letter-spacing:.2px">Legend</div>
<div class="btn def" style="left:371px;width:69px;padding-left:18px;line-height:22px"><u>C</u>lose</div>
<svg class="a" style="left:379px;top:30px;width:22px;height:21px"><path d="M11 2L19 1V19L11 20Z" fill="#9a917d" stroke="#111"/><path d="M2 9L9 11 7 15 1 13Z" fill="#d02018"/><path d="M3 16h14v3H3z" fill="#222" opacity=".7"/></svg>
<div class="btn def" style="left:445px;width:68px;padding-left:18px;line-height:22px"><u>H</u>elp</div>
<svg class="a" style="left:455px;top:31px;width:20px;height:18px"><path d="M2 8L12 2 19 8 9 15Z" fill="#7a1e9c" stroke="#111"/><path d="M2 8V11L9 17V15Z" fill="#e8e0c8" stroke="#111" stroke-width=".6"/><path d="M9 15V17L19 10V8Z" fill="#5a1070" stroke="#111" stroke-width=".6"/><path d="M9 6l3-2 3 2-3 2z" fill="#ffd800"/></svg>

<!-- vertical scrollbar -->
<div class="a vs" style="left:1172px;top:56px;width:18px;height:743px"></div>
<div class="a" style="left:1172px;top:57px;width:18px;height:16px;background:linear-gradient(135deg,#b8ac92,#6e624c);border-bottom:1px solid #111"></div>
<div class="a" style="left:1176px;top:60px;width:10px;height:10px;background:#dcd4bf;clip-path:polygon(50% 0,100% 100%,0 100%)"></div>
<div class="a" style="left:1174px;top:74px;width:13px;height:16px;box-sizing:border-box;background:#e8e6e0;border:2px solid #111"></div>
<div class="a" style="left:1172px;top:783px;width:18px;height:16px;background:linear-gradient(135deg,#b8ac92,#6e624c);border-top:1px solid #111"></div>
<div class="a" style="left:1176px;top:786px;width:10px;height:10px;background:#dcd4bf;clip-path:polygon(0 0,100% 0,50% 100%)"></div>
<!-- horizontal scrollbar -->
<div class="a hs" style="left:23px;top:799px;width:1149px;height:16px"></div>
<div class="a" style="left:23px;top:799px;width:17px;height:16px;background:linear-gradient(135deg,#b8ac92,#6e624c);border-right:1px solid #111"></div>
<div class="a" style="left:26px;top:802px;width:10px;height:10px;background:#dcd4bf;clip-path:polygon(100% 0,100% 100%,0 50%)"></div>
<div class="a" style="left:1155px;top:799px;width:17px;height:16px;background:linear-gradient(135deg,#b8ac92,#6e624c);border-left:1px solid #111"></div>
<div class="a" style="left:1159px;top:802px;width:10px;height:10px;background:#dcd4bf;clip-path:polygon(0 0,100% 50%,0 100%)"></div>
<div class="a" style="left:591px;top:800px;width:15px;height:14px;box-sizing:border-box;background:#e8e6e0;border:2px solid #111"></div>
<div class="a" style="left:1172px;top:799px;width:18px;height:16px;background:#dcd6c8;border:1px solid #111;box-sizing:border-box"></div>
<!-- bottom bar -->
<div class="a" style="left:0;top:815px;width:1211px;height:17px;background:linear-gradient(#111 0,#111 10%,#d6cdb8 18%,#e6dfcf 28%,#82745a 40%,#4a4032 60%,#6a5c46 75%,#d6cdb8 88%,#2c2820 100%)"></div>
<div class="a" style="left:22px;top:821px;width:13px;height:8px;background:#fff;clip-path:polygon(30% 0,100% 0,70% 100%,0 100%)"></div>
<div class="a" style="left:37px;top:821px;width:10px;height:8px;background:#fff;clip-path:polygon(30% 0,100% 0,70% 100%,0 100%)"></div>
<div class="a" style="left:50px;top:821px;width:13px;height:8px;background:#cfc6b2;clip-path:polygon(50% 0,100% 0,50% 100%,0 100%)"></div>
<div class="a" style="left:103px;top:821px;width:13px;height:8px;background:#cfc6b2;clip-path:polygon(50% 0,100% 0,50% 100%,0 100%)"></div>
<div class="a" style="left:1148px;top:821px;width:13px;height:8px;background:#cfc6b2;clip-path:polygon(0 0,50% 0,100% 100%,50% 100%)"></div>
<div class="a" style="left:1168px;top:821px;width:13px;height:8px;background:#cfc6b2;clip-path:polygon(0 0,50% 0,100% 100%,50% 100%)"></div>
</div>
</body></html>
